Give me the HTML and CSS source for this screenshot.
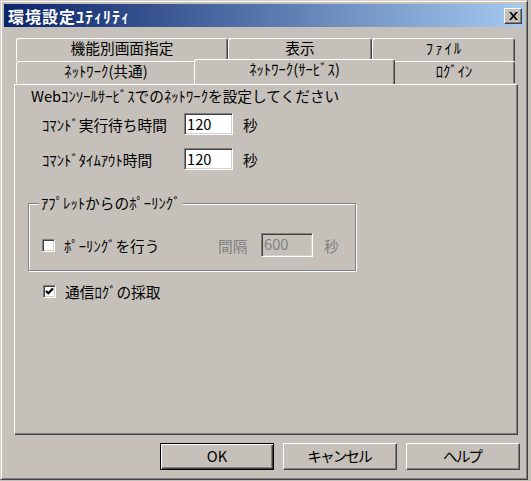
FILE: index.html
```html
<!DOCTYPE html>
<html lang="ja">
<head>
<meta charset="utf-8">
<title>環境設定ﾕﾃｨﾘﾃｨ</title>
<link rel="stylesheet" href="styles.css">
</head>
<body>
<div class="window">
  <div class="titlebar">
    <span class="title">環境設定ﾕﾃｨﾘﾃｨ</span>
    <span class="close-btn"><svg width="9" height="8" viewBox="0 0 9 8"><path d="M0 0h2.2l2.3 2.7L6.8 0H9L5.7 4 9 8H6.8L4.5 5.3 2.2 8H0l3.3-4z" fill="#000"/></svg></span>
  </div>
  <div class="client">
    <div class="tabs">
      <div class="tabrow back">
        <div class="tab t-func">機能別画面指定</div>
        <div class="tab t-disp">表示</div>
        <div class="tab t-file"><span class="wide-kana">ﾌｧｲﾙ</span></div>
      </div>
      <div class="tabrow front">
        <div class="tab t-net">ﾈｯﾄﾜｰｸ(共通)</div>
        <div class="tab t-svc selected">ﾈｯﾄﾜｰｸ(ｻｰﾋﾞｽ)</div>
        <div class="tab t-login">ﾛｸﾞｲﾝ</div>
      </div>
    </div>
    <div class="panel">
      <p class="desc">Webｺﾝｿｰﾙｻｰﾋﾞｽでのﾈｯﾄﾜｰｸを設定してください</p>
      <div class="field first">
        <span class="label">ｺﾏﾝﾄﾞ実行待ち時間</span>
        <span class="edit">120</span>
        <span class="unit">秒</span>
      </div>
      <div class="field second">
        <span class="label">ｺﾏﾝﾄﾞﾀｲﾑｱｳﾄ時間</span>
        <span class="edit">120</span>
        <span class="unit">秒</span>
      </div>
      <div class="group">
        <div class="legend">ｱﾌﾟﾚｯﾄからのﾎﾟｰﾘﾝｸﾞ</div>
        <div class="group-row">
          <span class="check"></span>
          <span class="check-label poll">ﾎﾟｰﾘﾝｸﾞを行う</span>
          <span class="dis-label">間隔</span>
          <span class="edit disabled">600</span>
          <span class="unit dis-unit">秒</span>
        </div>
      </div>
      <div class="check-row">
        <span class="check"><svg width="9" height="9" viewBox="0 0 9 9"><polyline points="1,4 3.3,6.3 8,1.5" fill="none" stroke="#000" stroke-width="2.2"/></svg></span>
        <span class="check-label">通信ﾛｸﾞの採取</span>
      </div>
    </div>
    <div class="buttons">
      <span class="btn default">OK</span>
      <span class="btn"><span class="btn-text">キャンセル</span></span>
      <span class="btn"><span class="btn-text">ヘルプ</span></span>
    </div>
  </div>
</div>
</body>
</html>
```

FILE: styles.css
```css
html, body {
  margin: 0;
  padding: 0;
}

body {
  background: #c5c1ba;
  font-family: "Noto Sans CJK JP", "Noto Sans", sans-serif;
  font-size: 14.7px;
  color: #000;
  width: 531px;
  height: 481px;
  overflow: hidden;
}

.window {
  box-sizing: border-box;
  width: 528px;
  height: 480px;
  padding: 3px;
  border: 1px solid;
  border-color: #d4d0c8 #404040 #404040 #d4d0c8;
  box-shadow: inset 1px 1px #ffffff, inset -1px -1px #808080;
  background: #c5c1ba;
}

.titlebar {
  height: 23px;
  display: flex;
  align-items: center;
  justify-content: space-between;
  padding: 0 2px 0 4px;
  background: linear-gradient(to right, #0a246a, #a6caf0);
}

.title {
  color: #fff;
  font-weight: bold;
  font-size: 16px;
  line-height: 20px;
  letter-spacing: 1px;
}

.close-btn {
  box-sizing: border-box;
  width: 18px;
  height: 16px;
  display: flex;
  align-items: center;
  justify-content: center;
  background: #c5c1ba;
  border: 1px solid;
  border-color: #ffffff #404040 #404040 #ffffff;
  box-shadow: inset -1px -1px #808080;
}

.client {
  padding: 11px 4px 0 10px;
}

.tabs {
  margin-left: 2px;
  width: 499px;
}

.tabrow {
  display: flex;
}

.tab {
  box-sizing: border-box;
  flex-shrink: 0;
  text-align: center;
  line-height: 18px;
  white-space: nowrap;
  background: #c5c1ba;
  border-top: 1px solid #ffffff;
  border-left: 1px solid #ffffff;
  border-right: 1px solid #404040;
  border-radius: 3px 3px 0 0;
  box-shadow: inset -1px 0 #808080;
}

.wide-kana {
  letter-spacing: 2px;
  margin-right: -2px;
}

.back .tab {
  height: 23px;
}

.front .tab {
  height: 22px;
}

.t-func { width: 212px; }
.t-disp { width: 144px; }
.t-file { width: 143px; }
.t-net { width: 180px; }
.t-login { width: 122px; }

.tab.selected {
  position: relative;
  z-index: 2;
  width: 201px;
  height: 25px;
  margin: -2px -2px 0;
}

.panel {
  box-sizing: border-box;
  width: 504px;
  height: 351px;
  border: 1px solid;
  border-color: #ffffff #404040 #404040 #ffffff;
  box-shadow: inset -1px -1px #808080;
}

.desc {
  margin: 2px 0 0 16px;
  line-height: 18px;
  white-space: nowrap;
}

.field {
  display: flex;
  align-items: center;
  height: 22px;
  margin-left: 27px;
}

.field.first {
  margin-top: 8px;
}

.field.second {
  margin-top: 13px;
}

.label {
  width: 142px;
  white-space: nowrap;
}

.edit {
  box-sizing: border-box;
  width: 49px;
  height: 22px;
  padding: 1px 0 0 2px;
  line-height: 17px;
  background: #ffffff;
  border: 1px solid;
  border-color: #808080 #ffffff #ffffff #808080;
  box-shadow: inset 1px 1px #404040, inset -1px -1px #d4d0c8;
}

.unit {
  margin-left: 10px;
}

.group {
  box-sizing: border-box;
  width: 328px;
  height: 68px;
  margin: 33px 0 0 13px;
  border: 1px solid #808080;
  box-shadow: inset 1px 1px #ffffff, 1px 1px #ffffff;
}

.legend {
  display: table;
  margin: -10px 0 0 10px;
  padding: 0 2px;
  line-height: 18px;
  background: #c5c1ba;
  white-space: nowrap;
}

.group-row {
  display: flex;
  align-items: center;
  height: 22px;
  margin: 22px 0 0 13px;
}

.check {
  box-sizing: border-box;
  flex-shrink: 0;
  width: 13px;
  height: 13px;
  display: flex;
  align-items: center;
  justify-content: center;
  background: #ffffff;
  border: 1px solid;
  border-color: #808080 #ffffff #ffffff #808080;
  box-shadow: inset 1px 1px #404040, inset -1px -1px #d4d0c8;
}

.check-label {
  margin-left: 9px;
  white-space: nowrap;
}

.check-label.poll {
  width: 154px;
}

.dis-label {
  color: #808080;
  width: 43px;
}

.edit.disabled {
  width: 52px;
  height: 24px;
  background: #c5c1ba;
  color: #808080;
}

.dis-unit {
  color: #808080;
  margin-left: 11px;
}

.check-row {
  display: flex;
  align-items: center;
  height: 18px;
  margin: 11px 0 0 28px;
}

.buttons {
  display: flex;
  justify-content: flex-end;
  gap: 9px;
  margin-top: 8px;
}

.btn {
  box-sizing: border-box;
  width: 114px;
  height: 27px;
  display: flex;
  align-items: center;
  justify-content: center;
  padding-bottom: 3px;
  border: 1px solid;
  border-color: #ffffff #404040 #404040 #ffffff;
  box-shadow: inset -1px -1px #808080;
}

.btn-text {
  letter-spacing: -2px;
  margin-right: 2px;
}

.btn.default {
  border-color: #000000;
  box-shadow: inset 1px 1px #ffffff, inset -1px -1px #404040, inset -2px -2px #808080;
}
```
